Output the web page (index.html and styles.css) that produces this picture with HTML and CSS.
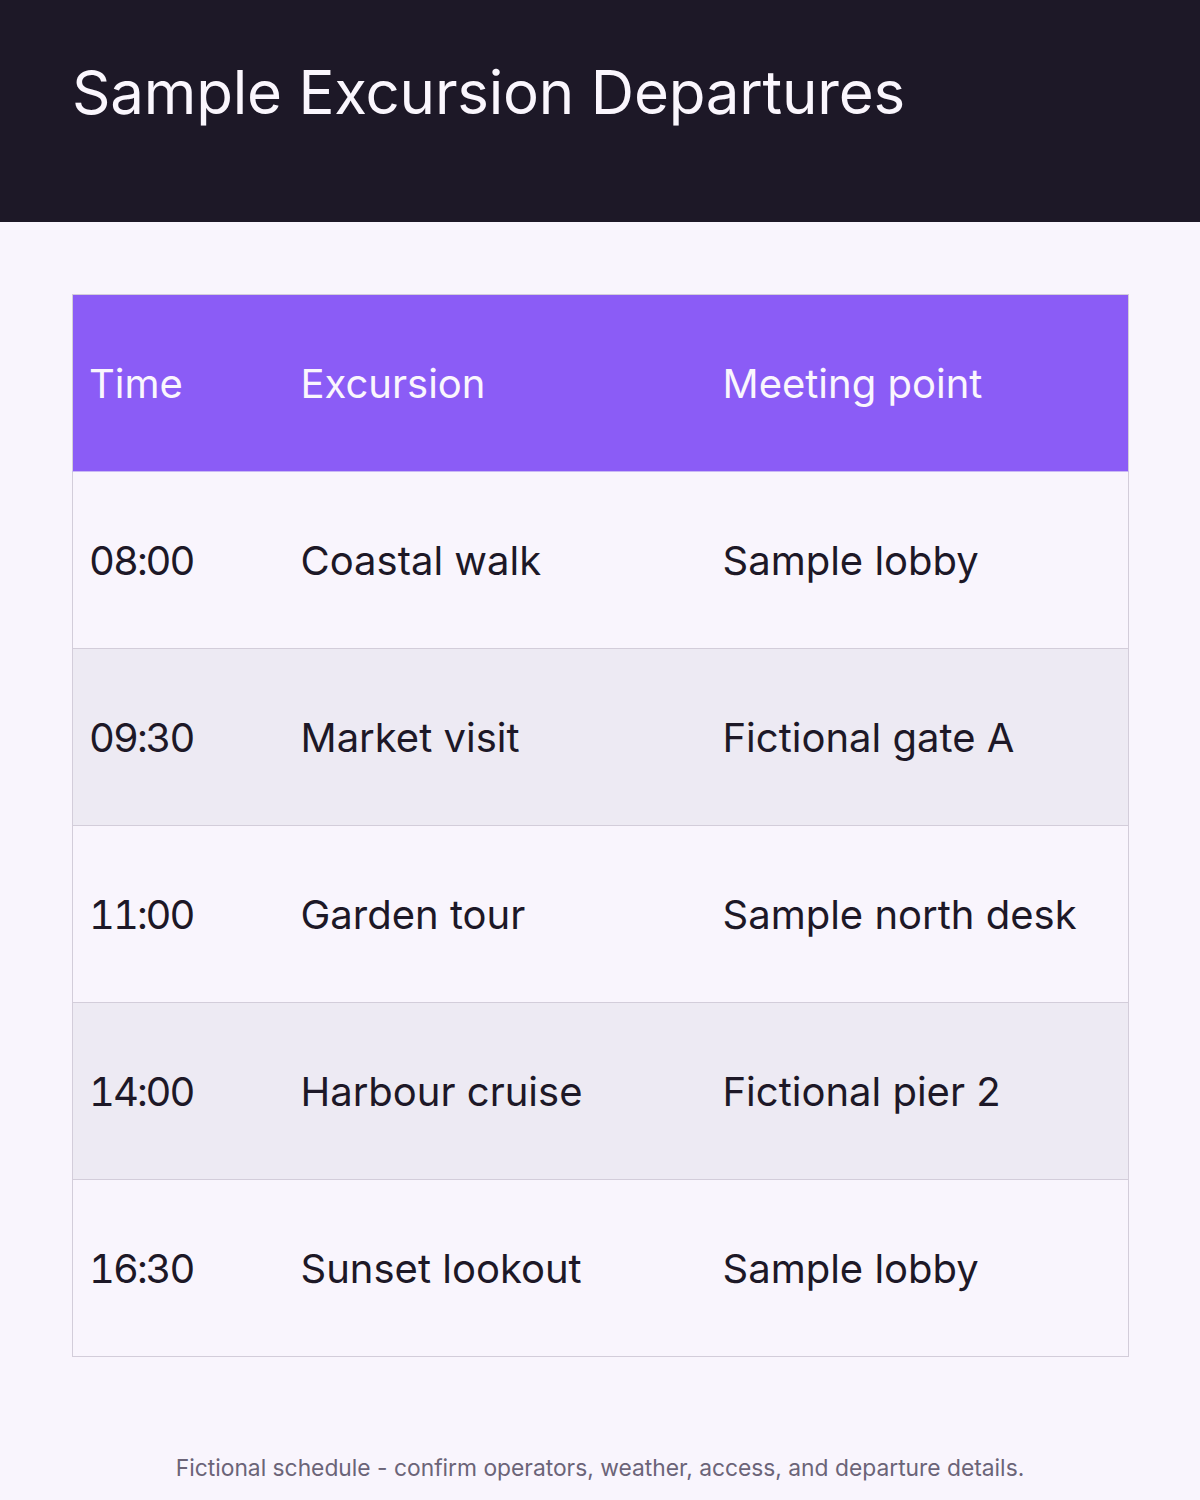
FILE: index.html
```html
<!DOCTYPE html>
<html lang="en">
<head>
<meta charset="utf-8">
<title>Sample Excursion Departures</title>
<link rel="stylesheet" href="styles.css">
</head>
<body>
<header class="topbar">
  <h1 class="title">Sample Excursion Departures</h1>
</header>
<main class="content">
  <table class="schedule">
    <thead>
      <tr>
        <th class="c-time">Time</th>
        <th class="c-exc">Excursion</th>
        <th class="c-meet">Meeting point</th>
      </tr>
    </thead>
    <tbody>
      <tr><td class="t">08:00</td><td>Coastal walk</td><td>Sample lobby</td></tr>
      <tr><td class="t">09:30</td><td>Market visit</td><td>Fictional gate A</td></tr>
      <tr><td class="t">11:00</td><td>Garden tour</td><td>Sample north desk</td></tr>
      <tr><td class="t">14:00</td><td>Harbour cruise</td><td>Fictional pier 2</td></tr>
      <tr><td class="t">16:30</td><td>Sunset lookout</td><td>Sample lobby</td></tr>
    </tbody>
  </table>
  <p class="note">Fictional schedule - confirm operators, weather, access, and departure details.</p>
</main>
</body>
</html>
```

FILE: styles.css
```css
* { box-sizing: border-box; }
html, body { margin: 0; padding: 0; }
body {
  background: #f9f5fd;
  font-family: Inter, "Noto Sans", sans-serif;
  color: #1d1827;
  width: 1200px;
  height: 1500px;
}
.topbar {
  background: #1d1827;
  height: 222px;
  padding: 56px 72px 0;
}
.title {
  margin: 0;
  font-weight: 400;
  font-size: 60px;
  line-height: 72px;
  color: #faf6fd;
  letter-spacing: -0.2px;
}
.content {
  padding: 72px 72px 0 72px;
}
.schedule {
  width: 1056px;
  border-collapse: collapse;
  table-layout: fixed;
  border: 1px solid #d3cdda;
}
.c-time { width: 212px; }
.c-exc { width: 422px; }
.c-meet { width: 422px; }
.schedule th, .schedule td {
  height: 177px;
  padding: 0 16px;
  text-align: left;
  vertical-align: middle;
  font-size: 40px;
  font-weight: 400;
  white-space: nowrap;
}
.schedule th {
  background: #8b5cf6;
  color: #faf6fd;
  border-bottom: 1px solid #c9b8f5;
}
.schedule td {
  color: #1d1827;
  border-top: 1px solid #d3cdda;
}
.schedule td.t {
  font-variant-numeric: tabular-nums;
  letter-spacing: -2px;
}
.schedule tbody tr:nth-child(odd) td { background: #f9f5fd; }
.schedule tbody tr:nth-child(even) td { background: #edeaf3; }
.note {
  margin: 96px 0 0;
  text-align: center;
  font-size: 22.8px;
  line-height: 30px;
  color: #6b6478;
}
```
